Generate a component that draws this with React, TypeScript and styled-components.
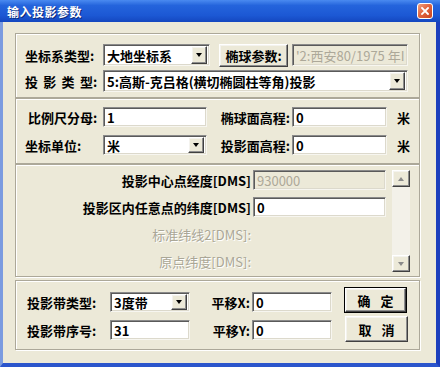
import React from 'react';
import styled, { createGlobalStyle, css } from 'styled-components';

const GlobalStyle = createGlobalStyle`
  html, body {
    margin: 0;
    padding: 0;
    background: #ece9d8;
  }
  body {
    font-family: "Noto Sans CJK SC", "Liberation Sans", sans-serif;
  }
`;

const sunken = css`
  box-sizing: border-box;
  border: 1px solid;
  border-color: #8a8a8a #f7f6f0 #f7f6f0 #8a8a8a;
  box-shadow: inset 1px 1px 0 #5a5a5a, inset -1px -1px 0 #dcd9cc;
`;

const raised = css`
  box-sizing: border-box;
  background: #ece9d8;
  border: 1px solid;
  border-color: #ffffff #404040 #404040 #ffffff;
  box-shadow: inset -1px -1px 0 #8d8d8d, inset 1px 1px 0 #f4f3ee;
`;

const Window = styled.div`
  width: 440px;
  height: 367px;
  display: flex;
  flex-direction: column;
  overflow: hidden;
`;

const TitleBar = styled.div`
  height: 22px;
  flex: none;
  display: flex;
  align-items: center;
  justify-content: space-between;
  padding: 0 7px;
  background: linear-gradient(to bottom, #4a8af0 0%, #2464dc 25%, #1c58d4 70%, #1447bf 100%);
`;

const TitleText = styled.span`
  color: #ffffff;
  font-size: 12px;
  font-weight: 700;
  letter-spacing: 0.5px;
  text-shadow: 1px 1px 0 #0c2a7a;
`;

const CloseButton = styled.div`
  width: 16px;
  height: 16px;
  box-sizing: border-box;
  border: 1px solid #ffffff;
  border-radius: 3px;
  background: linear-gradient(135deg, #f0a080 0%, #e2663f 45%, #c94420 100%);
  display: flex;
  align-items: center;
  justify-content: center;
`;

const Body = styled.div`
  flex: 1;
  background: #ece9d8;
  border-left: 3px solid #7b9be0;
  border-right: 4px solid #1c3fbd;
  border-bottom: 4px solid #2b55cc;
  padding: 11px 16px 0 12px;
  display: flex;
  flex-direction: column;
`;

const Group = styled.div<{ $h: number; $mt?: number }>`
  box-sizing: border-box;
  height: ${p => p.$h}px;
  margin-top: ${p => p.$mt || 0}px;
  border: 1px solid #aca899;
  box-shadow: inset 1px 1px 0 #ffffff, 1px 1px 0 #ffffff;
`;

const RowStack = styled.div<{ $pt: number; $pl: number; $gap: number }>`
  display: flex;
  flex-direction: column;
  gap: ${p => p.$gap}px;
  padding: ${p => p.$pt}px 0 0 ${p => p.$pl}px;
`;

const Row = styled.div<{ $h: number }>`
  display: flex;
  align-items: center;
  height: ${p => p.$h}px;
`;

const Label = styled.span<{ $w: number; $right?: boolean; $mr?: number; $muted?: boolean }>`
  flex: none;
  width: ${p => p.$w}px;
  margin-right: ${p => p.$mr || 0}px;
  text-align: ${p => (p.$right ? 'right' : 'left')};
  font-size: 13px;
  font-weight: ${p => (p.$muted ? 400 : 700)};
  color: ${p => (p.$muted ? '#aaa797' : '#000000')};
  text-shadow: ${p => (p.$muted ? '1px 1px 0 #ffffff' : 'none')};
  white-space: nowrap;
  line-height: 1;
`;

const Spaced = styled.span`
  letter-spacing: 5.3px;
`;

const Unit = styled.span`
  margin-left: 10px;
  font-size: 13px;
  font-weight: 700;
  color: #000000;
`;

const Field = styled.input<{ $w: number; $h: number }>`
  ${sunken};
  width: ${p => p.$w}px;
  height: ${p => p.$h}px;
  flex: none;
  margin: 0;
  padding: 0 3px;
  background: #ffffff;
  font-family: "Noto Sans CJK SC", "Liberation Sans", sans-serif;
  font-size: 13px;
  font-weight: 700;
  color: #000000;
  outline: none;

  &:disabled {
    background: #ece9d8;
    color: #aca899;
    -webkit-text-fill-color: #aca899;
    font-weight: 400;
  }
`;

const Combo = styled.div<{ $w?: number; $h: number; $mr?: number }>`
  ${sunken};
  flex: ${p => (p.$w ? 'none' : '1')};
  width: ${p => (p.$w ? `${p.$w}px` : 'auto')};
  height: ${p => p.$h}px;
  margin-right: ${p => p.$mr || 0}px;
  background: #ffffff;
  display: flex;
  align-items: stretch;
  padding: 1px 2px 1px 1px;
`;

const ComboText = styled.span`
  flex: 1;
  display: flex;
  align-items: center;
  padding-left: 2px;
  font-size: 13px;
  font-weight: 700;
  line-height: 1;
  color: #000000;
  white-space: nowrap;
  overflow: hidden;
`;

const DropButton = styled.span`
  ${raised};
  flex: none;
  width: 16px;
  display: flex;
  align-items: center;
  justify-content: center;
`;

const Arrow = styled.span<{ $up?: boolean; $color?: string }>`
  width: 0;
  height: 0;
  border-left: 3.5px solid transparent;
  border-right: 3.5px solid transparent;
  ${p =>
    p.$up
      ? `border-bottom: 4px solid ${p.$color || '#000'};`
      : `border-top: 4px solid ${p.$color || '#000'};`}
`;

const PushButton = styled.button<{ $w: number; $h: number; $wide?: boolean; $default?: boolean; $ml?: number }>`
  ${raised};
  flex: none;
  width: ${p => p.$w}px;
  height: ${p => p.$h}px;
  margin: 0 0 0 ${p => p.$ml || 0}px;
  padding: 0;
  font-family: "Noto Sans CJK SC", "Liberation Sans", sans-serif;
  font-size: 13px;
  font-weight: 700;
  line-height: 1;
  color: #000000;
  letter-spacing: ${p => (p.$wide ? 10 : 0)}px;
  text-indent: ${p => (p.$wide ? 10 : 0)}px;
  outline: ${p => (p.$default ? '1px solid #000000' : 'none')};
  outline-offset: 0;
`;

const Panel3Inner = styled.div`
  display: flex;
  padding-top: 5px;
`;

const Scrollbar = styled.div`
  flex: none;
  width: 18px;
  height: 102px;
  margin-left: 6px;
  display: flex;
  flex-direction: column;
  background: #f3f1e9;
`;

const ScrollButton = styled.div`
  ${raised};
  height: 17px;
  display: flex;
  align-items: center;
  justify-content: center;
`;

const Track = styled.div`
  flex: 1;
`;

const Panel4Inner = styled.div`
  display: flex;
  align-items: flex-start;
  padding: 7px 0 0 11px;
`;

const LeftCol = styled.div`
  display: flex;
  flex-direction: column;
  gap: 8px;
  margin-top: 4px;
`;

const ButtonCol = styled.div`
  display: flex;
  flex-direction: column;
  gap: 4px;
  margin-left: 13px;
`;

const App: React.FC = () => {
  return (
    <>
      <GlobalStyle />
      <Window>
        <TitleBar>
          <TitleText>输入投影参数</TitleText>
          <CloseButton>
            <svg width="8" height="8" viewBox="0 0 8 8">
              <path d="M1 1 L7 7 M7 1 L1 7" stroke="#ffffff" strokeWidth="1.8" strokeLinecap="square" />
            </svg>
          </CloseButton>
        </TitleBar>

        <Body>
          <Group $h={65}>
            <RowStack $pt={10} $pl={9} $gap={4}>
              <Row $h={22}>
                <Label $w={78}>坐标系类型:</Label>
                <Combo $w={107} $h={22} $mr={9}>
                  <ComboText>大地坐标系</ComboText>
                  <DropButton><Arrow /></DropButton>
                </Combo>
                <PushButton $w={69} $h={23}>椭球参数:</PushButton>
                <Field $w={116} $h={22} style={{ marginLeft: 4 }} disabled defaultValue="'2:西安80/1975 年IAG" />
              </Row>
              <Row $h={22}>
                <Label $w={78}><Spaced>投影类</Spaced>型:</Label>
                <Combo $h={22} $mr={11}>
                  <ComboText>5:高斯-克吕格(横切椭圆柱等角)投影</ComboText>
                  <DropButton><Arrow /></DropButton>
                </Combo>
              </Row>
            </RowStack>
          </Group>

          <Group $h={66}>
            <RowStack $pt={8} $pl={9} $gap={8}>
              <Row $h={20}>
                <Label $w={78}>&nbsp;比例尺分母:</Label>
                <Field $w={104} $h={20} readOnly defaultValue="1" />
                <Label $w={83} $right $mr={2}>椭球面高程:</Label>
                <Field $w={95} $h={20} readOnly defaultValue="0" />
                <Unit>米</Unit>
              </Row>
              <Row $h={20}>
                <Label $w={78}>坐标单位:</Label>
                <Combo $w={104} $h={20}>
                  <ComboText>米</ComboText>
                  <DropButton><Arrow /></DropButton>
                </Combo>
                <Label $w={83} $right $mr={2}>投影面高程:</Label>
                <Field $w={95} $h={20} readOnly defaultValue="0" />
                <Unit>米</Unit>
              </Row>
            </RowStack>
          </Group>

          <Group $h={113}>
            <Panel3Inner>
              <RowStack $pt={0} $pl={0} $gap={7}>
                <Row $h={20}>
                  <Label $w={235} $right $mr={2}>投影中心点经度[DMS]</Label>
                  <Field $w={133} $h={20} disabled defaultValue="930000" />
                </Row>
                <Row $h={20}>
                  <Label $w={235} $right $mr={2}>投影区内任意点的纬度[DMS]</Label>
                  <Field $w={133} $h={20} readOnly defaultValue="0" />
                </Row>
                <Row $h={20}>
                  <Label $w={235} $right $muted>标准纬线2[DMS]:</Label>
                </Row>
                <Row $h={20}>
                  <Label $w={235} $right $muted>原点纬度[DMS]:</Label>
                </Row>
              </RowStack>
              <Scrollbar>
                <ScrollButton><Arrow $up $color="#8a8a8a" /></ScrollButton>
                <Track />
                <ScrollButton><Arrow $color="#8a8a8a" /></ScrollButton>
              </Scrollbar>
            </Panel3Inner>
          </Group>

          <Group $h={70} $mt={3}>
            <Panel4Inner>
              <LeftCol>
                <Row $h={20}>
                  <Label $w={83}>投影带类型:</Label>
                  <Combo $w={80} $h={20}>
                    <ComboText>3度带</ComboText>
                    <DropButton><Arrow /></DropButton>
                  </Combo>
                  <Label $w={60} $right $mr={2}>平移X:</Label>
                  <Field $w={80} $h={20} readOnly defaultValue="0" />
                </Row>
                <Row $h={20}>
                  <Label $w={83}>投影带序号:</Label>
                  <Field $w={80} $h={20} readOnly defaultValue="31" />
                  <Label $w={60} $right $mr={2}>平移Y:</Label>
                  <Field $w={80} $h={20} readOnly defaultValue="0" />
                </Row>
              </LeftCol>
              <ButtonCol>
                <PushButton $w={61} $h={24} $wide $default>确定</PushButton>
                <PushButton $w={63} $h={26} $wide>取消</PushButton>
              </ButtonCol>
            </Panel4Inner>
          </Group>
        </Body>
      </Window>
    </>
  );
};

export default App;
